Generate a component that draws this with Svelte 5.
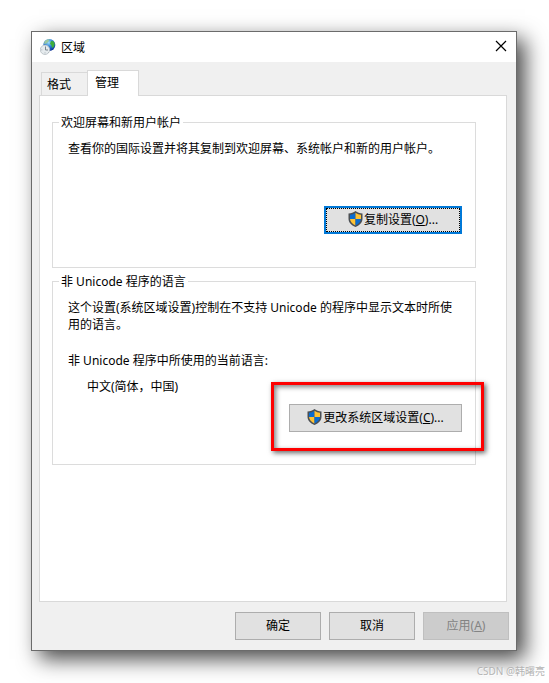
<script>
    const tabs = [
        { id: "formats", label: "格式" },
        { id: "admin", label: "管理" },
    ]

    let active = $state("admin")
</script>

{#snippet shield()}
    <svg class="shield" width="15" height="16" viewBox="0 0 15 16" aria-hidden="true">
        <path d="M7.500 0C5.500 1.600 3.300 2.300.5 2.400V7.500c0 4 2.600 6.800 7 8.500 4.400-1.700 7-4.500 7-8.500V2.400C11.700 2.300 9.500 1.600 7.500 0z" fill="#4b4f53" />
        <path d="M7.500 1.800C5.800 3 4 3.600 2 3.800V8h5.500z" fill="#0a6cd0" />
        <path d="M7.500 1.800C9.200 3 11 3.600 13 3.800V8H7.500z" fill="#ffc233" />
        <path d="M2 8h5.500v6.500C4.300 13 2.300 11 2 8z" fill="#ffc233" />
        <path d="M13 8H7.500v6.500C10.700 13 12.700 11 13 8z" fill="#0a6cd0" />
    </svg>
{/snippet}

<div class="stage">
    <div class="window" role="dialog" aria-labelledby="title">
        <header>
            <svg width="16" height="16" viewBox="0 0 16 16" aria-hidden="true">
                <defs>
                    <radialGradient id="sea" cx="0.45" cy="0.3" r="0.7">
                        <stop offset="0" stop-color="#9ddcf8" />
                        <stop offset="0.5" stop-color="#2a7fd4" />
                        <stop offset="1" stop-color="#0b2f96" />
                    </radialGradient>
                </defs>
                <circle cx="9.300" cy="6" r="6" fill="url(#sea)" />
                <path d="M4.600 2.500C6 1 8 .2 9.600.4L8.400 2.500 6.500 4.600 4 5z" fill="#9cc9a0" />
                <path d="M11 2l2.400.2 1.400 2.200-.8 3.400-1.800 1.300-.8-2.800-1.400-1.500z" fill="#3fae3c" />
                <circle cx="5" cy="10.800" r="4.700" fill="#e6ebee" stroke="#b4bcc1" stroke-width="0.800" />
                <path d="M5.500 7.500v3.500h2.500" fill="none" stroke="#7b868d" stroke-width="1" />
                <path d="M5 13.400v1M1.300 10.900h1M8 13l.6.6" stroke="#a7b0b5" stroke-width="1" />
            </svg>
            <h1 id="title">区域</h1>
            <button class="close" aria-label="关闭">
                <svg width="12" height="12" viewBox="0 0 12 12" aria-hidden="true">
                    <path d="M1 1l10 10M11 1L1 11" stroke="#000" stroke-width="1.200" />
                </svg>
            </button>
        </header>

        <div class="tabs" role="tablist">
            {#each tabs as tab}
                <button
                    role="tab"
                    class="tab"
                    class:active={active === tab.id}
                    aria-selected={active === tab.id}
                    onclick={() => (active = tab.id)}
                >{tab.label}</button>
            {/each}
        </div>

        <main>
            {#if active === "admin"}
                <fieldset class="welcome">
                    <legend>欢迎屏幕和新用户帐户</legend>
                    <p>查看你的国际设置并将其复制到欢迎屏幕、系统帐户和新的用户帐户。</p>
                    <div class="action">
                        <button class="push copy focused">{@render shield()}<span>复制设置(<u>O</u>)...</span></button>
                    </div>
                </fieldset>

                <fieldset class="language">
                    <legend>非 Unicode 程序的语言</legend>
                    <p>这个设置(系统区域设置)控制在不支持 Unicode 的程序中显示文本时所使用的语言。</p>
                    <p class="current">非 Unicode 程序中所使用的当前语言:</p>
                    <p class="value">中文(简体，中国)</p>
                    <div class="action">
                        <div class="marked">
                            <button class="push change">{@render shield()}<span>更改系统区域设置(<u>C</u>)...</span></button>
                        </div>
                    </div>
                </fieldset>
            {/if}
        </main>

        <footer>
            <button class="push">确定</button>
            <button class="push">取消</button>
            <button class="push" disabled><span>应用(<u>A</u>)</span></button>
        </footer>
    </div>
    <div class="credit">CSDN @韩曙亮</div>
</div>

<style>
    :global(body) {
        background: #fff;
    }

    .stage {
        position: relative;
        padding: 31px 32px 32px 31px;
        font: 12px/17px "Noto Sans", "Noto Sans CJK SC", sans-serif;
        color: #000;
    }

    .window {
        display: flex;
        flex-direction: column;
        border: 1px solid #6b6b6b;
        background: #f0f0f0;
        box-shadow: 8px 8px 20px rgba(0, 0, 0, 0.72);
    }

    header {
        display: flex;
        align-items: center;
        height: 30px;
        padding: 0 9px 0 8px;
        background: #fff;
    }

    h1 {
        flex: 1;
        margin: 0 0 0 5px;
        font-size: 12px;
        font-weight: normal;
    }

    button {
        font: inherit;
        color: inherit;
    }

    .close {
        display: flex;
        padding: 0 0 2px;
        border: none;
        background: none;
    }

    .tabs {
        display: flex;
        align-items: flex-end;
        padding: 8px 8px 0;
    }

    .tab {
        height: 23px;
        padding: 0 16px 0 5px;
        border: 1px solid #d9d9d9;
        border-bottom: none;
        background: #f0f0f0;
    }

    .tab:first-child {
        margin-left: 1px;
        border-right: none;
    }

    .tab.active {
        position: relative;
        height: 26px;
        margin-bottom: -1px;
        padding: 0 19px 2px 7px;
        background: #fff;
    }

    main {
        min-height: 479px;
        margin: 0 9px 0 7px;
        padding: 18px 30px 8px 12px;
        border: 1px solid #d9d9d9;
        background: #fff;
    }

    fieldset {
        min-width: 0;
        margin: 0;
        padding: 9px 13px 0 15px;
        border: 1px solid #dcdcdc;
    }

    legend {
        margin-left: -9px;
        padding: 0 2px;
    }

    p {
        margin: 0;
    }

    .action {
        display: flex;
        justify-content: flex-end;
    }

    .welcome {
        margin-bottom: 5px;
        padding-bottom: 33px;
    }

    .welcome .action {
        margin-top: 49px;
    }

    .language {
        padding-bottom: 32px;
    }

    .current {
        margin-top: 19px;
    }

    .value {
        margin: 9px 0 0 19px;
    }

    .language .action {
        margin-top: 9px;
    }

    .push {
        display: flex;
        align-items: center;
        justify-content: center;
        width: 86px;
        height: 28px;
        padding: 0 0 1px;
        border: 1px solid #adadad;
        background: #e1e1e1;
    }

    .push.copy {
        width: 138px;
    }

    .push.change {
        width: 173px;
    }

    .push.focused {
        border: 2px solid #0078d7;
        outline: 1px dotted #000;
        outline-offset: -3px;
    }

    .push:disabled {
        border-color: #bfbfbf;
        background: #ccc;
        color: #838383;
    }

    .shield {
        margin: 0 1px 2px 0;
    }

    u {
        text-underline-offset: 1px;
    }

    .marked {
        position: relative;
    }

    .marked::after {
        content: "";
        position: absolute;
        inset: -22px -22px -19px -18px;
        border: 3px solid #fe0000;
        box-shadow: 2px 2px 5px rgba(0, 0, 0, 0.6), inset 2px 2px 5px rgba(0, 0, 0, 0.5);
        pointer-events: none;
    }

    footer {
        display: flex;
        justify-content: flex-end;
        gap: 8px;
        padding: 10px 7px;
    }

    .credit {
        position: absolute;
        right: 4px;
        bottom: 3px;
        font-size: 10px;
        color: #b4b4b4;
        text-shadow: 1px 1px 1px #fff;
    }
</style>
